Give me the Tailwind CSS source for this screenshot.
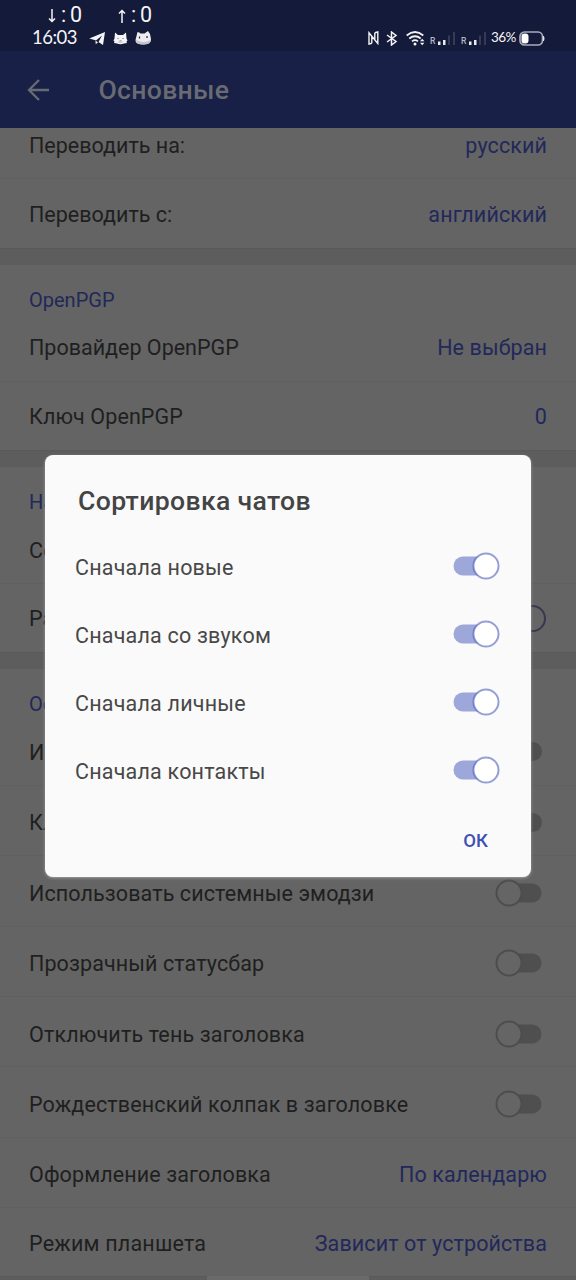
<!DOCTYPE html>
<html lang="ru">
<head>
<meta charset="utf-8">
<title>Основные</title>
<script src="https://cdn.jsdelivr.net/npm/@tailwindcss/browser@4"></script>
</head>
<body class="h-[1280px] w-[576px] overflow-hidden bg-[#5d5d5d]">
<div class="relative flex h-[1280px] w-[576px] flex-col overflow-hidden font-['Roboto',sans-serif] text-[21.5px] leading-none tracking-[0.1px] whitespace-nowrap text-[#1f1f1f]">
  <header class="flex h-[128px] shrink-0 flex-col bg-[#182047]">
    <div class="h-[51px] bg-[#141a39] text-[#f4f4f6]">
      <div class="flex h-[28px] items-center pt-[1px] pl-[48px] text-[21.5px] tracking-normal">
        <svg class="mt-[2px] h-[14px] w-[8px]" viewBox="0 0 8 14" fill="none" stroke="currentColor" stroke-width="1.500"><path d="M4 0v12.500M1 9.500l3 3 3-3"/></svg>
        <span class="ml-[5px] flex w-[21px] justify-between"><span>:</span><span>0</span></span>
        <svg class="mt-[2px] ml-[36px] h-[14px] w-[8px]" viewBox="0 0 8 14" fill="none" stroke="currentColor" stroke-width="1.500"><path d="M4 14V1.500M1 4.500l3-3 3 3"/></svg>
        <span class="ml-[5px] flex w-[21px] justify-between"><span>:</span><span>0</span></span>
      </div>
      <div class="flex h-[20px] items-center pl-[32px]">
        <span class="w-[57px] pb-[2px] font-['Lato',sans-serif] text-[18.500px] tracking-[-0.5px]">16:03</span>
        <svg class="h-[15px] w-[17px]" viewBox="0 0 17 15" fill="currentColor"><path d="M.3 7.500L16 1l-2 13-4.500-3 3.500-6.500-6 5-1.500-.5z"/><path d="M6.500 9.800l2.500 1.500-2.300 2z"/></svg>
        <svg class="ml-[7px] h-[13px] w-[15px]" viewBox="0 0 15 13"><path d="M2 .5l3 2.500h5l3-2.500.5 6 1 2-1 1 .5 1.500-3 .5q-3.500 1.500-7 0l-3-.5.500-1.500-1-1 1-2z" fill="currentColor"/><path d="M4 6.500h2M9 6.500h2M6.500 8.500h2M5.500 10h4" stroke="#9ea1b1" stroke-width=".9"/></svg>
        <svg class="ml-[7px] h-[14px] w-[17px]" viewBox="0 0 17 14"><path d="M2.500 1q2 0 3 1.500h4L13 0l2 3 1 5q.5 5-7.500 5.500Q0 13.500.5 9z" fill="#ececee"/><path d="M1 9q7 4 15 0-.5 4.500-7.500 4.500T1 9" fill="#c3c4cb"/><path d="M4.500 5.500v2M12 5v2" stroke="#1c2140" stroke-width="1.200"/></svg>
        <div class="ml-auto flex items-center pr-[31px]">
          <svg class="h-[14px] w-[11px]" viewBox="0 0 11 14" fill="none" stroke="currentColor" stroke-width="1.400"><path d="M3.800 12.300L1 13V1.800l8.800 10.700V1L6.800 1.800M3.800 5v7.300M6.800 1.800v6.500"/></svg>
          <svg class="ml-[7px] h-[15px] w-[12px]" viewBox="0 0 12 15" fill="none" stroke="currentColor" stroke-width="1.500"><path d="M1 4l9 6.500-4.500 3.500V1L10 4.500 1 11"/></svg>
          <svg class="ml-[8px] h-[15px] w-[19px]" viewBox="0 0 19 15" fill="none" stroke="currentColor" stroke-width="1.700"><path d="M.7 4.500Q9 -2.500 17.300 4.500M3.300 7.500q5.700-4.500 11.400 0M6 10.300q3-2.300 6 0"/><circle cx="9" cy="13" r="1.500" fill="currentColor" stroke="none"/><path d="M14 10.200l2.200-2.400 2.200 2.400zM14 11.800l2.200 2.400 2.200-2.400z" fill="currentColor" stroke="none"/></svg>
          <span class="ml-[5px] w-[5px] self-end text-[8.500px] font-medium tracking-normal text-[#b7b9c5]">R</span>
          <svg class="ml-[1px] h-[15px] w-[20px]" viewBox="0 0 20 15"><path d="M2 10.500h2.500V14H2zM7 9h2.500v5H7z" fill="#ececf0"/><path d="M12 4.500h2V14h-2zM17 1h2v13h-2z" fill="#353a57"/></svg>
          <span class="ml-[5px] w-[5px] self-end text-[8.500px] font-medium tracking-normal text-[#b7b9c5]">R</span>
          <svg class="ml-[1px] h-[15px] w-[20px]" viewBox="0 0 20 15"><path d="M2 10.500h2.500V14H2zM7 9h2.500v5H7z" fill="#ececf0"/><path d="M12 4.500h2V14h-2zM17 1h2v13h-2z" fill="#353a57"/></svg>
          <span class="ml-[4px] w-[25px] font-['Lato',sans-serif] text-[13.500px] tracking-[-0.6px]">36%</span>
          <svg class="ml-[3px] h-[15px] w-[26px]" viewBox="0 0 26 15"><rect x="1" y="1" width="22.500" height="13" rx="4.500" fill="none" stroke="#a9abba" stroke-width="1.700"/><rect x="2.500" y="2.500" width="7" height="10" rx="3" fill="#fff"/><path d="M24.500 5v5q1.300-2.500 0-5" fill="#fff" stroke="#fff" stroke-width=".6"/></svg>
        </div>
      </div>
    </div>
    <div class="flex h-[77px] items-center pl-[27px] text-[#696b72]">
      <svg class="h-[22px] w-[22px]" viewBox="0 0 22 22" fill="none" stroke="currentColor" stroke-width="2.300"><path d="M22 11H2M12 1L2 11l10 10"/></svg>
      <h1 class="ml-[49.500px] pt-[2px] text-[26.600px] font-medium tracking-[0.3px]">Основные</h1>
    </div>
  </header>

  <main class="flex flex-col">
    <section class="border-b border-[#595959] bg-[#646464]">
      <div class="flex h-[51px] items-center justify-between border-b border-[#606060] px-[29px] pb-[14px]"><span class="tracking-normal">Переводить на:</span><span class="text-[#22285a]">русский</span></div>
      <div class="flex h-[69px] items-center justify-between px-[29px] pt-[2px]"><span class="tracking-normal">Переводить с:</span><span class="text-[#22285a]">английский</span></div>
    </section>
    <section class="mt-[16px] border-b border-[#595959] bg-[#646464]">
      <h2 class="flex h-[48px] items-end px-[29px] pb-[3px] text-[20px] tracking-normal text-[#22285a]">OpenPGP</h2>
      <div class="flex h-[69px] items-center justify-between border-b border-[#606060] px-[29px] pt-[2px]"><span class="tracking-normal">Провайдер OpenPGP</span><span class="text-[#22285a]">Не выбран</span></div>
      <div class="flex h-[68px] items-center justify-between px-[29px] pt-[2px]"><span>Ключ OpenPGP</span><span class="text-[#22285a]">0</span></div>
    </section>
    <section class="mt-[16px] border-b border-[#595959] bg-[#646464]">
      <h2 class="flex h-[48px] items-end px-[29px] pb-[3px] text-[20px] tracking-normal text-[#22285a]">На</h2>
      <div class="flex h-[69px] items-center border-b border-[#606060] px-[29px] pt-[3px]">Со</div>
      <div class="flex h-[68px] items-center justify-between pr-[30px] pl-[29px]"><span class="pt-[2px]">Ра</span><span class="h-[27px] w-[27px] rounded-full border-2 border-[#37384f] bg-[#656565]"></span></div>
    </section>
    <section class="mt-[16px] border-b border-[#595959] bg-[#646464]">
      <h2 class="flex h-[48px] items-end px-[29px] pb-[3px] text-[20px] tracking-normal text-[#22285a]">Ос</h2>
      <div class="flex h-[69px] items-center justify-between border-b border-[#606060] pr-[34px] pl-[29px]"><span class="pt-[3px]">Ис</span><span class="h-[19px] w-[36px] rounded-full bg-[#4f4f4f]"></span></div>
      <div class="flex h-[70px] items-center justify-between border-b border-[#606060] pt-[3px] pr-[34px] pl-[29px]"><span class="pt-[2px]">Кл</span><span class="h-[19px] w-[36px] rounded-full bg-[#4f4f4f]"></span></div>
      <div class="flex h-[71px] items-center justify-between border-b border-[#606060] pt-[4px] pr-[34px] pl-[29px]"><span class="pt-[2px]">Использовать системные эмодзи</span><svg class="h-[28px] w-[47px]" viewBox="0 0 47 28"><rect x="6" y="4.500" width="40.500" height="19" rx="9.500" fill="#4f4f4f"/><circle cx="14" cy="14" r="12.500" fill="#656565" stroke="#4d4d4d" stroke-width="2"/></svg></div>
      <div class="flex h-[70px] items-center justify-between border-b border-[#606060] pt-[3px] pr-[34px] pl-[29px]"><span class="pt-[2px]">Прозрачный статусбар</span><svg class="h-[28px] w-[47px]" viewBox="0 0 47 28"><rect x="6" y="4.500" width="40.500" height="19" rx="9.500" fill="#4f4f4f"/><circle cx="14" cy="14" r="12.500" fill="#656565" stroke="#4d4d4d" stroke-width="2"/></svg></div>
      <div class="flex h-[70px] items-center justify-between border-b border-[#606060] pt-[4px] pr-[34px] pl-[29px]"><span class="pt-[2px] tracking-[0.15px]">Отключить тень заголовка</span><svg class="h-[28px] w-[47px]" viewBox="0 0 47 28"><rect x="6" y="4.500" width="40.500" height="19" rx="9.500" fill="#4f4f4f"/><circle cx="14" cy="14" r="12.500" fill="#656565" stroke="#4d4d4d" stroke-width="2"/></svg></div>
      <div class="flex h-[71px] items-center justify-between border-b border-[#606060] pt-[4px] pr-[34px] pl-[29px]"><span class="pt-[2px] tracking-[0.13px]">Рождественский колпак в заголовке</span><svg class="h-[28px] w-[47px]" viewBox="0 0 47 28"><rect x="6" y="4.500" width="40.500" height="19" rx="9.500" fill="#4f4f4f"/><circle cx="14" cy="14" r="12.500" fill="#656565" stroke="#4d4d4d" stroke-width="2"/></svg></div>
      <div class="flex h-[70px] items-center justify-between border-b border-[#606060] px-[29px] pt-[5px]"><span>Оформление заголовка</span><span class="text-[#22285a]">По календарю</span></div>
      <div class="flex h-[68px] items-center justify-between px-[29px] pt-[4px]"><span class="tracking-[0.2px]">Режим планшета</span><span class="text-[#22285a]">Зависит от устройства</span></div>
    </section>
  </main>

  <div class="absolute bottom-0 left-[207px] h-[4px] w-[162px] bg-[#6a6a6a]"></div>

  <div role="dialog" class="absolute top-[455px] left-[45px] flex h-[422px] w-[486px] flex-col rounded-[8px] bg-[#fafafa] tracking-[0.2px] text-[#484848] shadow-[0_1px_3px_0px_#a0a0a0]">
    <h2 class="flex h-[77px] items-center pt-[15px] pl-[33px] text-[26.600px] font-medium tracking-[0.35px] text-[#444444]">Сортировка чатов</h2>
    <div class="flex h-[68px] items-center justify-between pr-[31px] pl-[30px]"><span class="pt-[3px]">Сначала новые</span><svg class="h-[28px] w-[47px]" viewBox="0 0 47 28"><rect x=".5" y="4.500" width="40" height="19" rx="9.500" fill="#9ea7da"/><circle cx="33" cy="14" r="12.500" fill="#fff"/><circle cx="33" cy="14" r="12.500" fill="none" stroke="#3f51b5" stroke-opacity=".55" stroke-width="2"/></svg></div>
    <div class="flex h-[68px] items-center justify-between pr-[31px] pl-[30px]"><span class="pt-[3px]">Сначала со звуком</span><svg class="h-[28px] w-[47px]" viewBox="0 0 47 28"><rect x=".5" y="4.500" width="40" height="19" rx="9.500" fill="#9ea7da"/><circle cx="33" cy="14" r="12.500" fill="#fff"/><circle cx="33" cy="14" r="12.500" fill="none" stroke="#3f51b5" stroke-opacity=".55" stroke-width="2"/></svg></div>
    <div class="flex h-[68px] items-center justify-between pr-[31px] pl-[30px]"><span class="pt-[3px]">Сначала личные</span><svg class="h-[28px] w-[47px]" viewBox="0 0 47 28"><rect x=".5" y="4.500" width="40" height="19" rx="9.500" fill="#9ea7da"/><circle cx="33" cy="14" r="12.500" fill="#fff"/><circle cx="33" cy="14" r="12.500" fill="none" stroke="#3f51b5" stroke-opacity=".55" stroke-width="2"/></svg></div>
    <div class="flex h-[68px] items-center justify-between pr-[31px] pl-[30px]"><span class="pt-[3px]">Сначала контакты</span><svg class="h-[28px] w-[47px]" viewBox="0 0 47 28"><rect x=".5" y="4.500" width="40" height="19" rx="9.500" fill="#9ea7da"/><circle cx="33" cy="14" r="12.500" fill="#fff"/><circle cx="33" cy="14" r="12.500" fill="none" stroke="#3f51b5" stroke-opacity=".55" stroke-width="2"/></svg></div>
    <button class="mt-[28px] mr-[43px] self-end text-[18.500px] leading-none font-medium tracking-normal text-[#3f51b5]">ОК</button>
  </div>
</div>
</body>
</html>
